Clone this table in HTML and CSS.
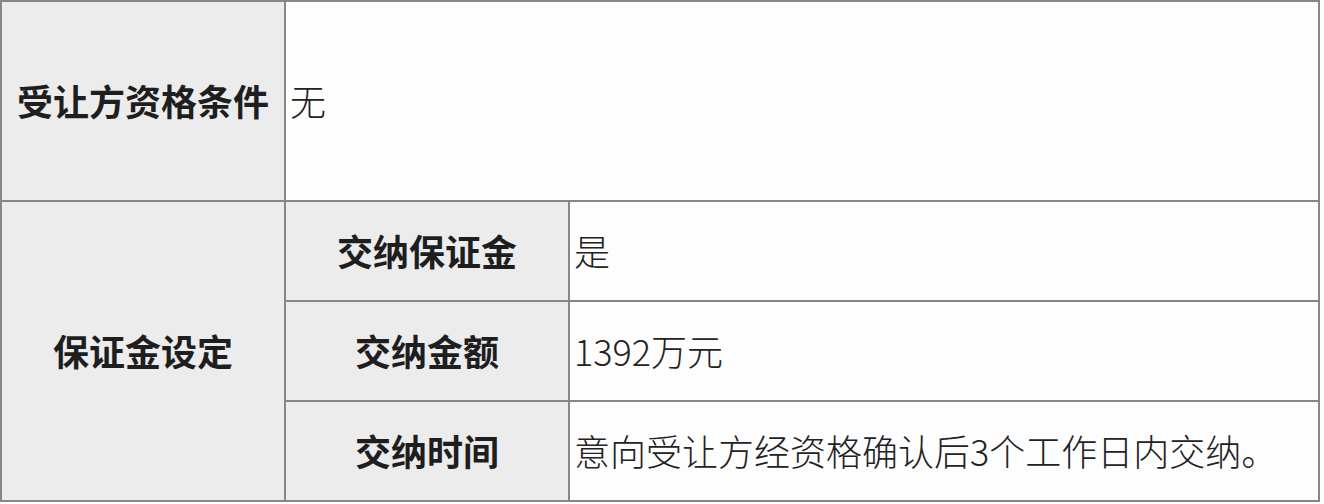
FILE: index.html
```html
<!DOCTYPE html>
<html lang="zh-CN">
<head>
<meta charset="utf-8">
<link rel="stylesheet" href="styles.css">
</head>
<body>
<table class="info">
  <colgroup>
    <col class="c1">
    <col class="c2">
    <col class="c3">
  </colgroup>
  <tr class="tall">
    <th class="head">受让方资格条件</th>
    <td class="val" colspan="2">无</td>
  </tr>
  <tr class="row">
    <th class="head" rowspan="3">保证金设定</th>
    <th class="head">交纳保证金</th>
    <td class="val">是</td>
  </tr>
  <tr class="row">
    <th class="head">交纳金额</th>
    <td class="val">1392万元</td>
  </tr>
  <tr class="row">
    <th class="head">交纳时间</th>
    <td class="val">意向受让方经资格确认后3个工作日内交纳。</td>
  </tr>
</table>
</body>
</html>
```

FILE: styles.css
```css
html, body {
  margin: 0;
  padding: 0;
  background: #ffffff;
}
.info {
  border-collapse: collapse;
  table-layout: fixed;
  width: 1318px;
  font-family: "Noto Sans CJK SC", "Noto Sans", sans-serif;
  font-size: 36px;
  color: #222222;
}
.c1 { width: 284px; }
.c2 { width: 284px; }
.c3 { width: 750px; }
.info th, .info td {
  border: 2px solid #878787;
  padding: 0;
  line-height: 1.2;
  vertical-align: middle;
}
.tall { height: 200px; }
.row { height: 100px; }
.head {
  background: #ececed;
  font-weight: 700;
  text-align: center;
  color: #1e1e1e;
}
.val {
  background: #fdfdfe;
  font-weight: 300;
  text-align: left;
  padding-left: 4px !important;
  white-space: nowrap;
}
```
